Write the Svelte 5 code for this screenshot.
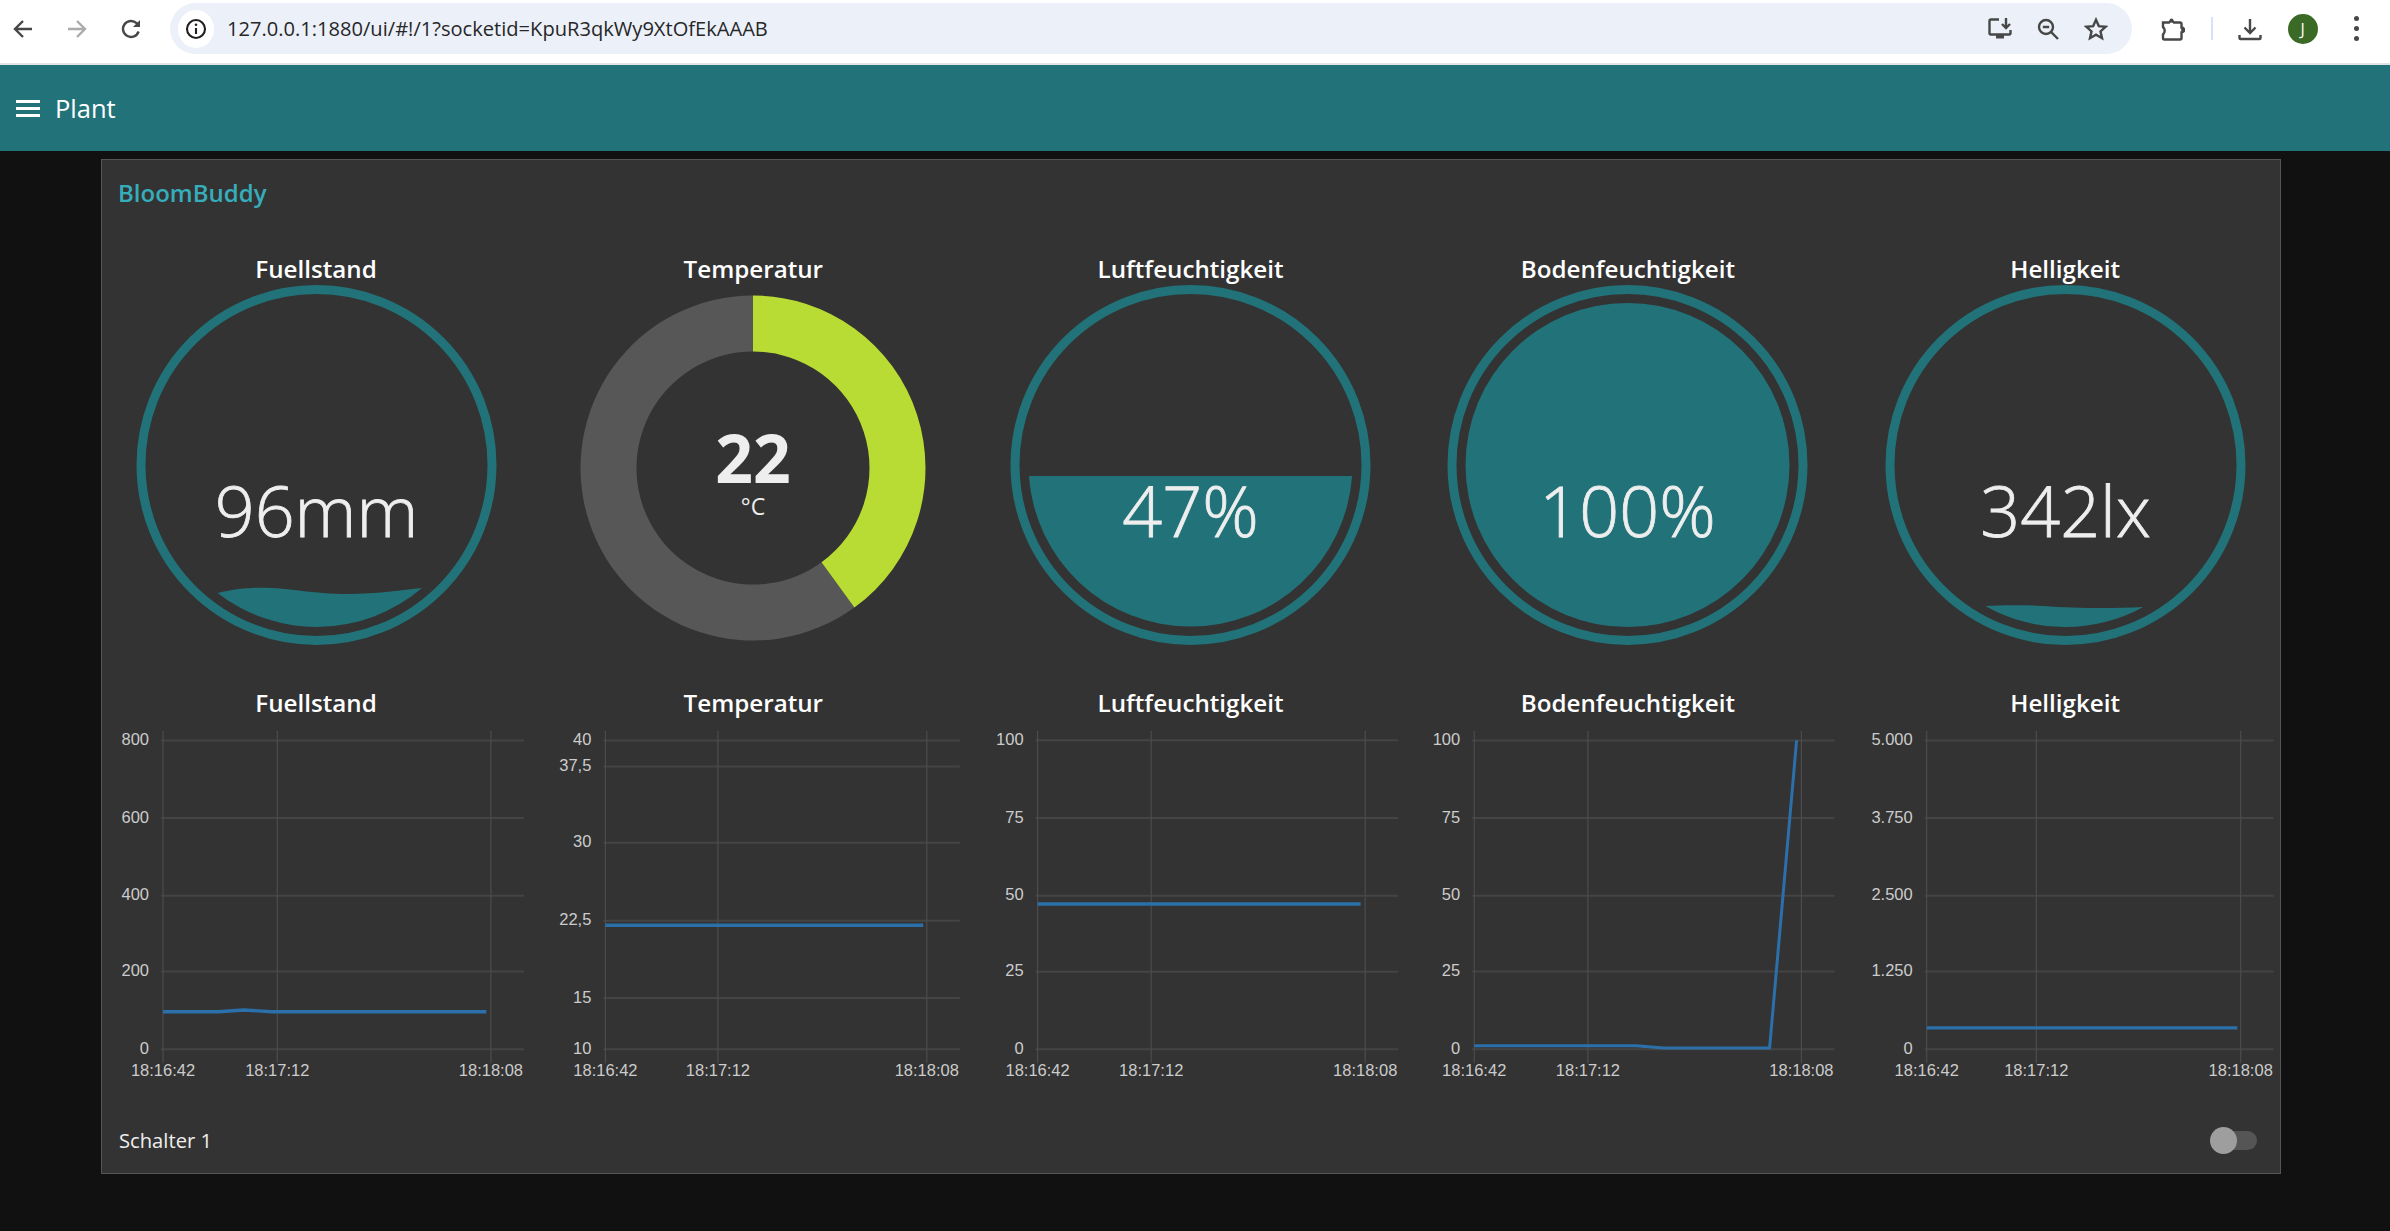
<script lang="ts">
  type Gauge = { title: string; value: string; fill?: string };

  const gauges: Gauge[] = [
    {
      title: "Fuellstand",
      value: "96mm",
      fill: "M113.5 308C130 304 145 302.7 155 302.7C190 302.7 205 309 245 309C270 309 300 305 318 303A162 162 0 0 1 113.5 308Z",
    },
    { title: "Temperatur", value: "22" },
    { title: "Luftfeuchtigkeit", value: "47%", fill: "M50.9 191H374.1A162 162 0 0 1 50.9 191Z" },
    {
      title: "Bodenfeuchtigkeit",
      value: "100%",
      fill: "M50.5 180A162 162 0 1 1 374.5 180A162 162 0 1 1 50.5 180Z",
    },
    {
      title: "Helligkeit",
      value: "342lx",
      fill: "M132.3 321C150 320 170 320 190 321C225 323.5 260 323.5 290.3 322A162 162 0 0 1 132.3 321Z",
    },
  ];

  const yZero = 330.3;

  // all x values are local to the chart cell, y values come from the tick list
  const charts = [
    {
      title: "Fuellstand",
      axis: 59,
      mid: 173.3,
      end: 386.9,
      ticks: [["800", 21.4], ["600", 99], ["400", 176.7], ["200", 252.6], ["0", 330.3]],
      line: "59,292.7 114,292.7 140,291 168,292.7 382.3,292.7",
      width: 3.4,
    },
    {
      title: "Temperatur",
      axis: 64.4,
      mid: 176.9,
      end: 385.8,
      ticks: [["40", 21.4], ["37,5", 47.4], ["30", 123.7], ["22,5", 201.7], ["15", 279], ["10", 330.3]],
      line: "64.4,206.3 382.2,206.3",
      width: 3.4,
    },
    {
      title: "Luftfeuchtigkeit",
      axis: 59.6,
      mid: 173.2,
      end: 387.2,
      ticks: [["100", 21.3], ["75", 99], ["50", 176.7], ["25", 252.7], ["0", 330.3]],
      line: "59.6,185 382.6,185",
      width: 3.4,
    },
    {
      title: "Bodenfeuchtigkeit",
      axis: 59.2,
      mid: 172.9,
      end: 386.4,
      ticks: [["100", 21.4], ["75", 99], ["50", 176.7], ["25", 252.6], ["0", 330.3]],
      line: "59.2,326.8 221,326.8 248.6,329 354.6,329 381.6,21.4",
      width: 3,
    },
    {
      title: "Helligkeit",
      axis: 73.7,
      mid: 183.3,
      end: 387.7,
      ticks: [["5.000", 21.4], ["3.750", 99], ["2.500", 176.7], ["1.250", 252.6], ["0", 330.3]],
      line: "73.7,308.9 384.3,308.9",
      width: 3.4,
    },
  ];

  const cx = 212;
  const cy = 183;

  function point(r: number, deg: number) {
    const a = (deg * Math.PI) / 180;
    return `${(cx + r * Math.sin(a)).toFixed(2)} ${(cy - r * Math.cos(a)).toFixed(2)}`;
  }

  function ringSlice(from: number, to: number, outer: number, inner: number) {
    const large = to - from > 180 ? 1 : 0;
    return `M${point(outer, from)}A${outer} ${outer} 0 ${large} 1 ${point(outer, to)}L${point(inner, to)}A${inner} ${inner} 0 ${large} 0 ${point(inner, from)}Z`;
  }
</script>

<div class="page">
  <header class="toolbar">
    <span class="nav first">
      <svg viewBox="0 0 24 24"><path d="M21 12H4M12 4l-8 8 8 8" /></svg>
    </span>
    <span class="nav off">
      <svg viewBox="0 0 24 24"><path d="M3 12h17M12 4l8 8-8 8" /></svg>
    </span>
    <span class="nav">
      <svg viewBox="0 0 24 24">
        <path d="M19.6 14.5A8 8 0 1 1 17.6 6.2L20 8.6" />
        <path class="solid" d="M21 3v7h-7z" />
      </svg>
    </span>

    <div class="omnibox">
      <span class="info">
        <svg viewBox="0 0 24 24">
          <circle cx="12" cy="12" r="9" />
          <path d="M12 11v6" />
          <circle class="solid" cx="12" cy="7.8" r="1.3" />
        </svg>
      </span>
      <span class="url">127.0.0.1:1880/ui/#!/1?socketid=KpuR3qkWy9XtOfEkAAAB</span>
      <div class="omni-actions">
        <span class="tool">
          <svg viewBox="0 0 24 24">
            <path d="M11 2.5H3A1.5 1.5 0 0 0 1.5 4v12A1.5 1.5 0 0 0 3 17.5h18a1.5 1.5 0 0 0 1.5-1.5v-3" />
            <path class="solid" d="M8 18h8v3.5H8z" />
            <path d="M18 1v9.5M14 7l4 4 4-4" />
          </svg>
        </span>
        <span class="tool">
          <svg viewBox="0 0 24 24">
            <circle cx="10" cy="10" r="7" />
            <path d="M15.2 15.2L22 22M6.8 10h6.4" />
          </svg>
        </span>
        <span class="tool">
          <svg viewBox="0 0 24 24">
            <path d="M12 2.8l2.8 6.3 6.9.7-5.2 4.6 1.5 6.8-6-3.5-6 3.5 1.5-6.8-5.2-4.6 6.9-.7z" />
          </svg>
        </span>
      </div>
    </div>

    <span class="tool ext">
      <svg viewBox="0 0 24 24">
        <path d="M2 5.5h6a3 3 0 0 1 5 0h6a1.5 1.5 0 0 1 1.5 1.5v3.5a2.5 2.5 0 0 1 0 5V21a1.5 1.5 0 0 1-1.5 1.5H3.5A1.5 1.5 0 0 1 2 21v-3.5a5 5 0 0 0 0-7.5z" />
        <circle class="solid" cx="10.5" cy="3.4" r="2" />
        <circle class="solid" cx="22" cy="13" r="2" />
      </svg>
    </span>
    <span class="sep"></span>
    <span class="tool dl">
      <svg viewBox="0 0 24 24">
        <path d="M12 2v14M6.5 10.5L12 16l5.5-5.5M1.5 18v3a1 1 0 0 0 1 1h19a1 1 0 0 0 1-1v-3" />
      </svg>
    </span>
    <span class="avatar">J</span>
    <span class="kebab"><i></i><i></i><i></i></span>
  </header>

  <div class="appbar">
    <span class="burger"><i></i><i></i><i></i></span>
    <span class="app-title">Plant</span>
  </div>

  <main class="panel">
    <h2 class="group-title">BloomBuddy</h2>

    <div class="row gauges">
      {#each gauges as g}
        <div class="cell">
          <div class="cell-title">{g.title}</div>
          <svg class="gauge" viewBox="0 0 425 368">
            {#if g.fill}
              <circle class="ring" cx="212.5" cy="180" r="175.5" />
              <path class="liquid" d={g.fill} />
              <text class="reading" x="212.5" y="251.7">{g.value}</text>
            {:else}
              <path class="donut-bg" d={ringSlice(144, 360, 172.5, 116.5)} />
              <path class="donut-on" d={ringSlice(0, 144, 172.5, 116.5)} />
              <text class="donut-value" x={cx} y="198.3">{g.value}</text>
              <text class="donut-unit" x={cx} y="230">°C</text>
            {/if}
          </svg>
        </div>
      {/each}
    </div>

    <div class="row charts">
      {#each charts as c}
        <div class="cell">
          <div class="cell-title">{c.title}</div>
          <svg class="chart" viewBox="0 0 425 368">
            {#each c.ticks as t}
              <line class="grid" x1={c.axis - 2} x2={c.end + 33} y1={t[1]} y2={t[1]} />
              <text class="tick-y" x={c.axis - 14} y={Number(t[1]) + 4.5}>{t[0]}</text>
            {/each}
            <line class="grid-v" x1={c.axis} x2={c.axis} y1="12" y2={yZero + 14} />
            <line class="grid-v" x1={c.mid} x2={c.mid} y1="12" y2={yZero + 14} />
            <line class="grid-v" x1={c.end} x2={c.end} y1="12" y2={yZero + 14} />
            <polyline class="series" style="stroke-width: {c.width}" points={c.line} />
            <text class="tick-x" x={c.axis} y={yZero + 27}>18:16:42</text>
            <text class="tick-x" x={c.mid} y={yZero + 27}>18:17:12</text>
            <text class="tick-x" x={c.end} y={yZero + 27}>18:18:08</text>
          </svg>
        </div>
      {/each}
    </div>

    <div class="switch-row">
      <span>Schalter 1</span>
      <span class="toggle"><span class="thumb"></span></span>
    </div>
  </main>
</div>

<style>
  :global(body) {
    margin: 0;
    background: #111111;
    font-family: "Open Sans", "Noto Sans", sans-serif;
  }

  .page {
    width: 2390px;
    height: 1231px;
    overflow: hidden;
    background: #111111;
  }

  .toolbar {
    display: flex;
    align-items: center;
    height: 57px;
    padding-bottom: 6px;
    background: #ffffff;
    border-bottom: 2px solid #e3e3e3;
  }

  .toolbar svg {
    width: 24px;
    height: 24px;
    fill: none;
    stroke: #474747;
    stroke-width: 2.4;
  }

  .toolbar svg .solid {
    fill: #474747;
    stroke: none;
  }

  .nav {
    display: flex;
    justify-content: center;
    width: 54px;
    flex: none;
  }

  .nav.first {
    margin-left: -4px;
  }

  .nav.off svg {
    stroke: #ababab;
  }

  .omnibox {
    display: flex;
    align-items: center;
    width: 1962px;
    height: 51px;
    margin-left: 12px;
    padding-right: 12px;
    box-sizing: border-box;
    flex: none;
    border-radius: 26px;
    background: #ecf0f9;
  }

  .info {
    display: flex;
    align-items: center;
    justify-content: center;
    width: 36px;
    height: 38px;
    margin-left: 8px;
    border-radius: 50%;
    background: #ffffff;
    flex: none;
  }

  .info svg {
    stroke: #1f1f1f;
    stroke-width: 2.1;
  }

  .info svg .solid {
    fill: #1f1f1f;
  }

  .url {
    margin-left: 13px;
    font-size: 20.1px;
    color: #272727;
    white-space: nowrap;
  }

  .omni-actions {
    display: flex;
    margin-left: auto;
  }

  .tool {
    display: flex;
    justify-content: center;
    width: 48px;
    flex: none;
  }

  .tool.ext {
    margin-left: 16.7px;
  }

  .sep {
    width: 2px;
    height: 23px;
    margin-left: 14px;
    background: #d3e3fd;
    flex: none;
  }

  .tool.dl {
    margin-left: 13px;
  }

  .avatar {
    display: flex;
    align-items: center;
    justify-content: center;
    width: 30px;
    height: 30px;
    margin-left: 14px;
    border-radius: 50%;
    background: #3b6a26;
    color: #ffffff;
    font-size: 16px;
    flex: none;
  }

  .kebab {
    display: flex;
    flex-direction: column;
    align-items: center;
    gap: 5px;
    width: 24px;
    margin-left: 26.7px;
    flex: none;
  }

  .kebab i {
    width: 5px;
    height: 5px;
    border-radius: 50%;
    background: #474747;
  }

  .appbar {
    display: flex;
    align-items: center;
    height: 86px;
    padding-left: 16px;
    background: #217379;
  }

  .burger {
    display: flex;
    flex-direction: column;
    gap: 4px;
    width: 24px;
  }

  .burger i {
    height: 3px;
    background: #ffffff;
  }

  .app-title {
    margin-left: 15px;
    font-size: 25.5px;
    color: #ffffff;
  }

  .panel {
    display: flex;
    flex-direction: column;
    width: 2180px;
    height: 1015px;
    margin: 8px 0 0 101px;
    box-sizing: border-box;
    border: 1px solid #555555;
    background: #333333;
  }

  .group-title {
    height: 92px;
    margin: 0;
    padding: 17px 0 0 16px;
    box-sizing: border-box;
    font-size: 24px;
    font-weight: 600;
    line-height: 32px;
    color: #36adba;
  }

  .row {
    display: grid;
    grid-template-columns: repeat(5, 425px);
    column-gap: 12.3px;
    padding-left: 1.5px;
  }

  .cell-title {
    height: 33px;
    font-size: 24.2px;
    font-weight: 600;
    line-height: 33px;
    text-align: center;
    color: #ffffff;
  }

  .gauge,
  .chart {
    display: block;
    width: 425px;
    height: 368px;
    overflow: visible;
  }

  .gauges {
    height: 434px;
  }

  .ring {
    fill: none;
    stroke: #217379;
    stroke-width: 9;
  }

  .liquid {
    fill: #217379;
  }

  .reading {
    font-size: 70px;
    font-weight: 300;
    text-anchor: middle;
    fill: #eeeeee;
    stroke: #eeeeee;
    stroke-width: 0.8px;
  }

  .donut-bg {
    fill: #575757;
  }

  .donut-on {
    fill: #b9dc34;
  }

  .donut-value {
    font-size: 66px;
    font-weight: 700;
    text-anchor: middle;
    fill: #eeeeee;
  }

  .donut-unit {
    font-size: 23px;
    text-anchor: middle;
    fill: #eeeeee;
  }

  .grid {
    stroke: #444444;
    stroke-width: 2;
  }

  .grid-v {
    stroke: #4c4c4c;
    stroke-width: 1.2;
  }

  .series {
    fill: none;
    stroke: #2b70aa;
    stroke-linejoin: round;
  }

  .tick-y,
  .tick-x {
    font-family: "Liberation Sans", Arial, sans-serif;
    font-size: 16.5px;
    fill: #cccccc;
  }

  .tick-y {
    text-anchor: end;
  }

  .tick-x {
    text-anchor: middle;
  }

  .switch-row {
    display: flex;
    align-items: center;
    justify-content: space-between;
    height: 40px;
    margin-top: 33px;
    padding: 0 23px 0 17px;
    font-size: 20.2px;
    color: #eeeeee;
  }

  .toggle {
    position: relative;
    width: 42px;
    height: 19px;
    border-radius: 10px;
    background: #555555;
  }

  .thumb {
    position: absolute;
    left: -5px;
    top: -4px;
    width: 27px;
    height: 27px;
    border-radius: 50%;
    background: #9e9e9e;
  }
</style>
